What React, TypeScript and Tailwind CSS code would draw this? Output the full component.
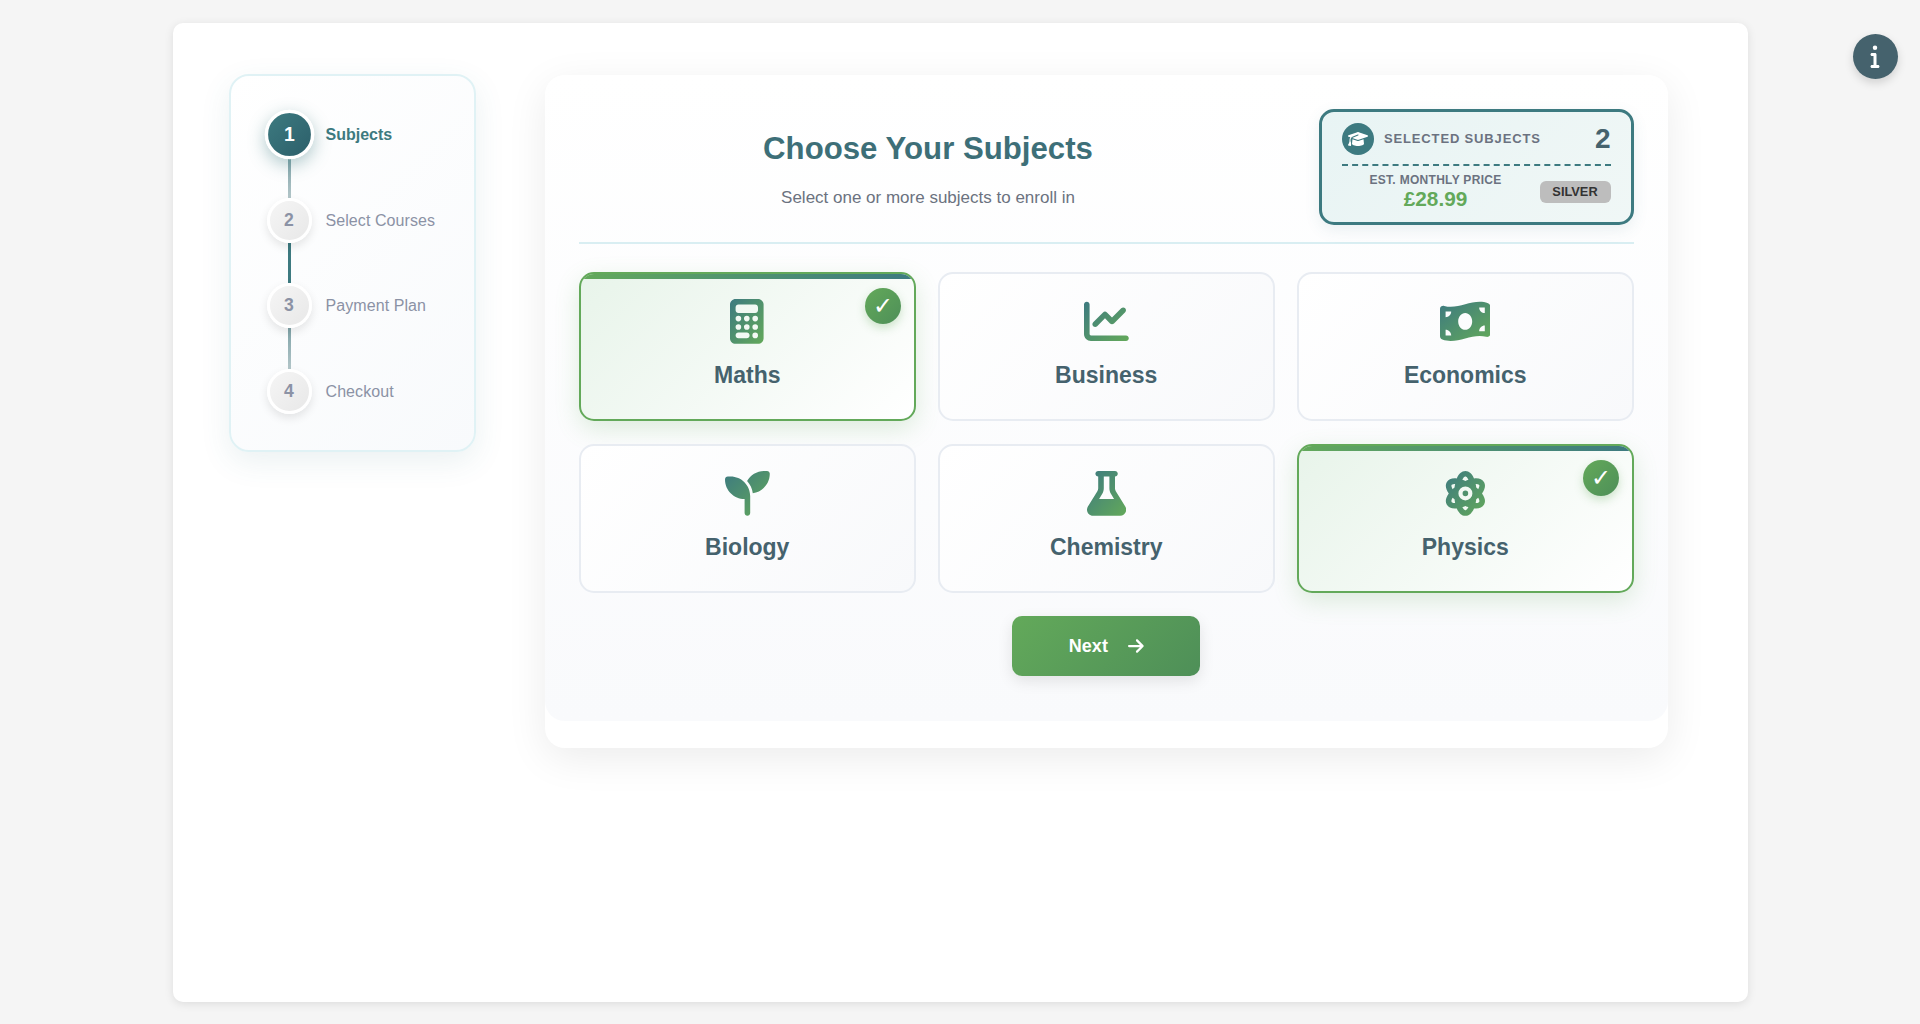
import type { IconType } from "react-icons"
import {
  FaArrowRight,
  FaAtom,
  FaCalculator,
  FaChartLine,
  FaFlask,
  FaGraduationCap,
  FaInfo,
  FaMoneyBillWave,
  FaSeedling,
} from "react-icons/fa6"

const steps = ["Subjects", "Select Courses", "Payment Plan", "Checkout"]

const connectors = [
  "bg-gradient-to-b from-[#7fa3a8] to-[#b3c6c9]",
  "bg-[#3d7a80]",
  "bg-gradient-to-b from-[#7fa3a8] to-[#b3c6c9]",
]

const subjects: { name: string; icon: IconType; iconSize: string; selected?: boolean }[] = [
  { name: "Maths", icon: FaCalculator, iconSize: "w-[33.6px] h-[44.8px]", selected: true },
  { name: "Business", icon: FaChartLine, iconSize: "w-[44.8px] h-[44.8px]" },
  { name: "Economics", icon: FaMoneyBillWave, iconSize: "w-[50.4px] h-[44.8px]" },
  { name: "Biology", icon: FaSeedling, iconSize: "w-[44.8px] h-[44.8px]" },
  { name: "Chemistry", icon: FaFlask, iconSize: "w-[39.2px] h-[44.8px]" },
  { name: "Physics", icon: FaAtom, iconSize: "w-[44.8px] h-[44.8px]", selected: true },
]

function Stepper() {
  return (
    <aside className="w-[247px] h-[378px] -mt-[1px] -ml-[1px] shrink-0 rounded-[20px] border-2 border-[#e0f2f5] bg-[linear-gradient(135deg,#ffffff,#f8fafc)] pl-[35.5px] pt-[36px] shadow-[0_10px_30px_rgba(61,122,128,0.1)]">
      {steps.map((label, i) => (
        <div key={label}>
          <div className="flex items-center gap-[14px] h-[45px]">
            {i === 0 ? (
              <div className="w-[45px] h-[45px] shrink-0 rounded-full border-[3px] border-white bg-[linear-gradient(135deg,#3d7a80,#2c5f6a)] flex items-center justify-center text-white text-[17.6px] font-bold scale-110 shadow-[0_5px_15px_rgba(61,122,128,0.4)]">
                1
              </div>
            ) : (
              <div className="w-[45px] h-[45px] shrink-0 rounded-full border-[3px] border-white bg-[linear-gradient(135deg,#f5f5f5,#e8e8e8)] flex items-center justify-center text-[#8b92a5] text-[17.6px] font-bold shadow-[0_4px_10px_rgba(0,0,0,0.1)]">
                {i + 1}
              </div>
            )}
            <span
              className={
                i === 0
                  ? "text-[16px] font-bold text-[#3d7a80]"
                  : "text-[16px] pt-[1px] tracking-[0.08px] text-[#8b92a5]"
              }
            >
              {label}
            </span>
          </div>
          {i < 3 && <div className={`w-[3px] h-[40.5px] ml-[21px] ${connectors[i]}`} />}
        </div>
      ))}
    </aside>
  )
}

function SummaryCard() {
  return (
    <div className="w-[314.5px] h-[116px] shrink-0 rounded-[15px] border-[3px] border-[#3d7a80] bg-[linear-gradient(135deg,#e8f4f4,#f0f7f6)] px-[20px] pt-[7px] shadow-[0_5px_15px_rgba(61,122,128,0.1)]">
      <div className="flex items-center h-[40px]">
        <div className="w-[32px] h-[32px] rounded-full bg-[#3d7a80] flex items-center justify-center text-white">
          <FaGraduationCap className="w-[20px] h-[16px]" />
        </div>
        <span className="ml-[10px] text-[13px] font-bold tracking-[0.85px] text-[#6b7280]">SELECTED SUBJECTS</span>
        <span className="ml-auto text-[28px] leading-none font-bold text-[#45626d]">2</span>
      </div>
      <div className="mt-[5px] border-t-2 border-dashed border-[#3d7a80]" />
      <div className="flex items-center justify-between mt-[7px]">
        <div className="w-[187px] text-center">
          <div className="text-[12px] leading-[14px] font-semibold tracking-[0.3px] text-[#6b7280]">EST. MONTHLY PRICE</div>
          <div className="text-[20.8px] leading-[24px] font-bold text-[#63a95a]">£28.99</div>
        </div>
        <div className="w-[71px] h-[22px] rounded-[6px] bg-[#bdbdbd] flex items-center justify-center text-[12.8px] font-semibold text-[#333333]">
          SILVER
        </div>
      </div>
    </div>
  )
}

function SubjectCard({
  name,
  icon: Icon,
  iconSize,
  selected,
}: {
  name: string
  icon: IconType
  iconSize: string
  selected?: boolean
}) {
  return (
    <div
      className={
        selected
          ? "relative h-[149px] overflow-hidden rounded-[15px] border-2 border-[#63a95a] bg-[linear-gradient(135deg,#e8f4ea,#ffffff)] flex flex-col items-center pt-[25px] shadow-[0_8px_25px_rgba(99,169,90,0.2)]"
          : "relative h-[149px] overflow-hidden rounded-[15px] border-2 border-[#e8ecf2] bg-[linear-gradient(135deg,#ffffff,#f8f9fb)] flex flex-col items-center pt-[25px]"
      }
    >
      {selected && <div className="absolute top-0 left-0 right-0 h-[5px] bg-gradient-to-r from-[#63a95a] to-[#3d7a80]" />}
      <Icon className={iconSize} fill="url(#iconGradient)" />
      <div className="mt-[18px] text-[23px] leading-[26px] font-bold text-[#45626d]">{name}</div>
      {selected && (
        <div className="absolute top-[14px] right-[13px] w-[36px] h-[36px] rounded-full bg-[linear-gradient(135deg,#63a95a,#4e8f58)] flex items-center justify-center text-white text-[24px] leading-none shadow-[0_4px_10px_rgba(99,169,90,0.3)]">
          ✓
        </div>
      )}
    </div>
  )
}

export default function App() {
  return (
    <div className="relative min-h-screen bg-[#f5f5f5] pt-[23px] font-['Liberation_Sans',Arial,sans-serif]">
      <svg width="0" height="0" className="absolute">
        <defs>
          <linearGradient id="iconGradient" x1="0" y1="0" x2="1" y2="1">
            <stop offset="0%" stopColor="#3d7a80" />
            <stop offset="100%" stopColor="#63a95a" />
          </linearGradient>
        </defs>
      </svg>

      <div className="ml-[173px] w-[1575px] h-[979px] rounded-[10px] bg-white shadow-[0_2px_10px_rgba(0,0,0,0.1)] pl-[57px] pt-[52px] flex gap-[69px] items-start">
        <Stepper />

        <main className="w-[1123px] h-[673px] rounded-[20px] bg-white shadow-[0_10px_40px_rgba(0,0,0,0.08)]">
          <div className="h-[646px] rounded-[20px] bg-gradient-to-b from-white to-[#f9fafc] pl-[34px] pr-[34.5px] pt-[34px]">
            <div className="flex justify-between h-[135px] border-b-2 border-[#d9eef2]">
              <div className="w-[698px] text-center pt-[21px]">
                <h1 className="text-[31.2px] leading-[37px] font-bold text-[#3d6f78]">Choose Your Subjects</h1>
                <p className="mt-[22px] text-[17px] leading-[18px] text-[#6b7280]">Select one or more subjects to enroll in</p>
              </div>
              <SummaryCard />
            </div>

            <div className="mt-[28px] grid grid-cols-3 gap-x-[22.5px] gap-y-[23px]">
              {subjects.map((s) => (
                <SubjectCard key={s.name} {...s} />
              ))}
            </div>

            <div className="mt-[23px] flex justify-center">
              <button className="w-[188px] h-[60px] rounded-[10px] bg-[linear-gradient(135deg,#63a95a,#4e8f58)] flex items-center justify-center gap-[20px] text-white text-[18px] font-bold shadow-[0_5px_15px_rgba(0,0,0,0.1)]">
                Next
                <FaArrowRight className="w-[15.75px] h-[18px]" />
              </button>
            </div>
          </div>
        </main>
      </div>

      <button className="absolute top-[33.5px] left-[1852.5px] w-[45px] h-[45px] rounded-full bg-[#45626d] flex items-center justify-center text-white shadow-[0_4px_10px_rgba(0,0,0,0.15)]">
        <FaInfo size={24} />
      </button>
    </div>
  )
}
